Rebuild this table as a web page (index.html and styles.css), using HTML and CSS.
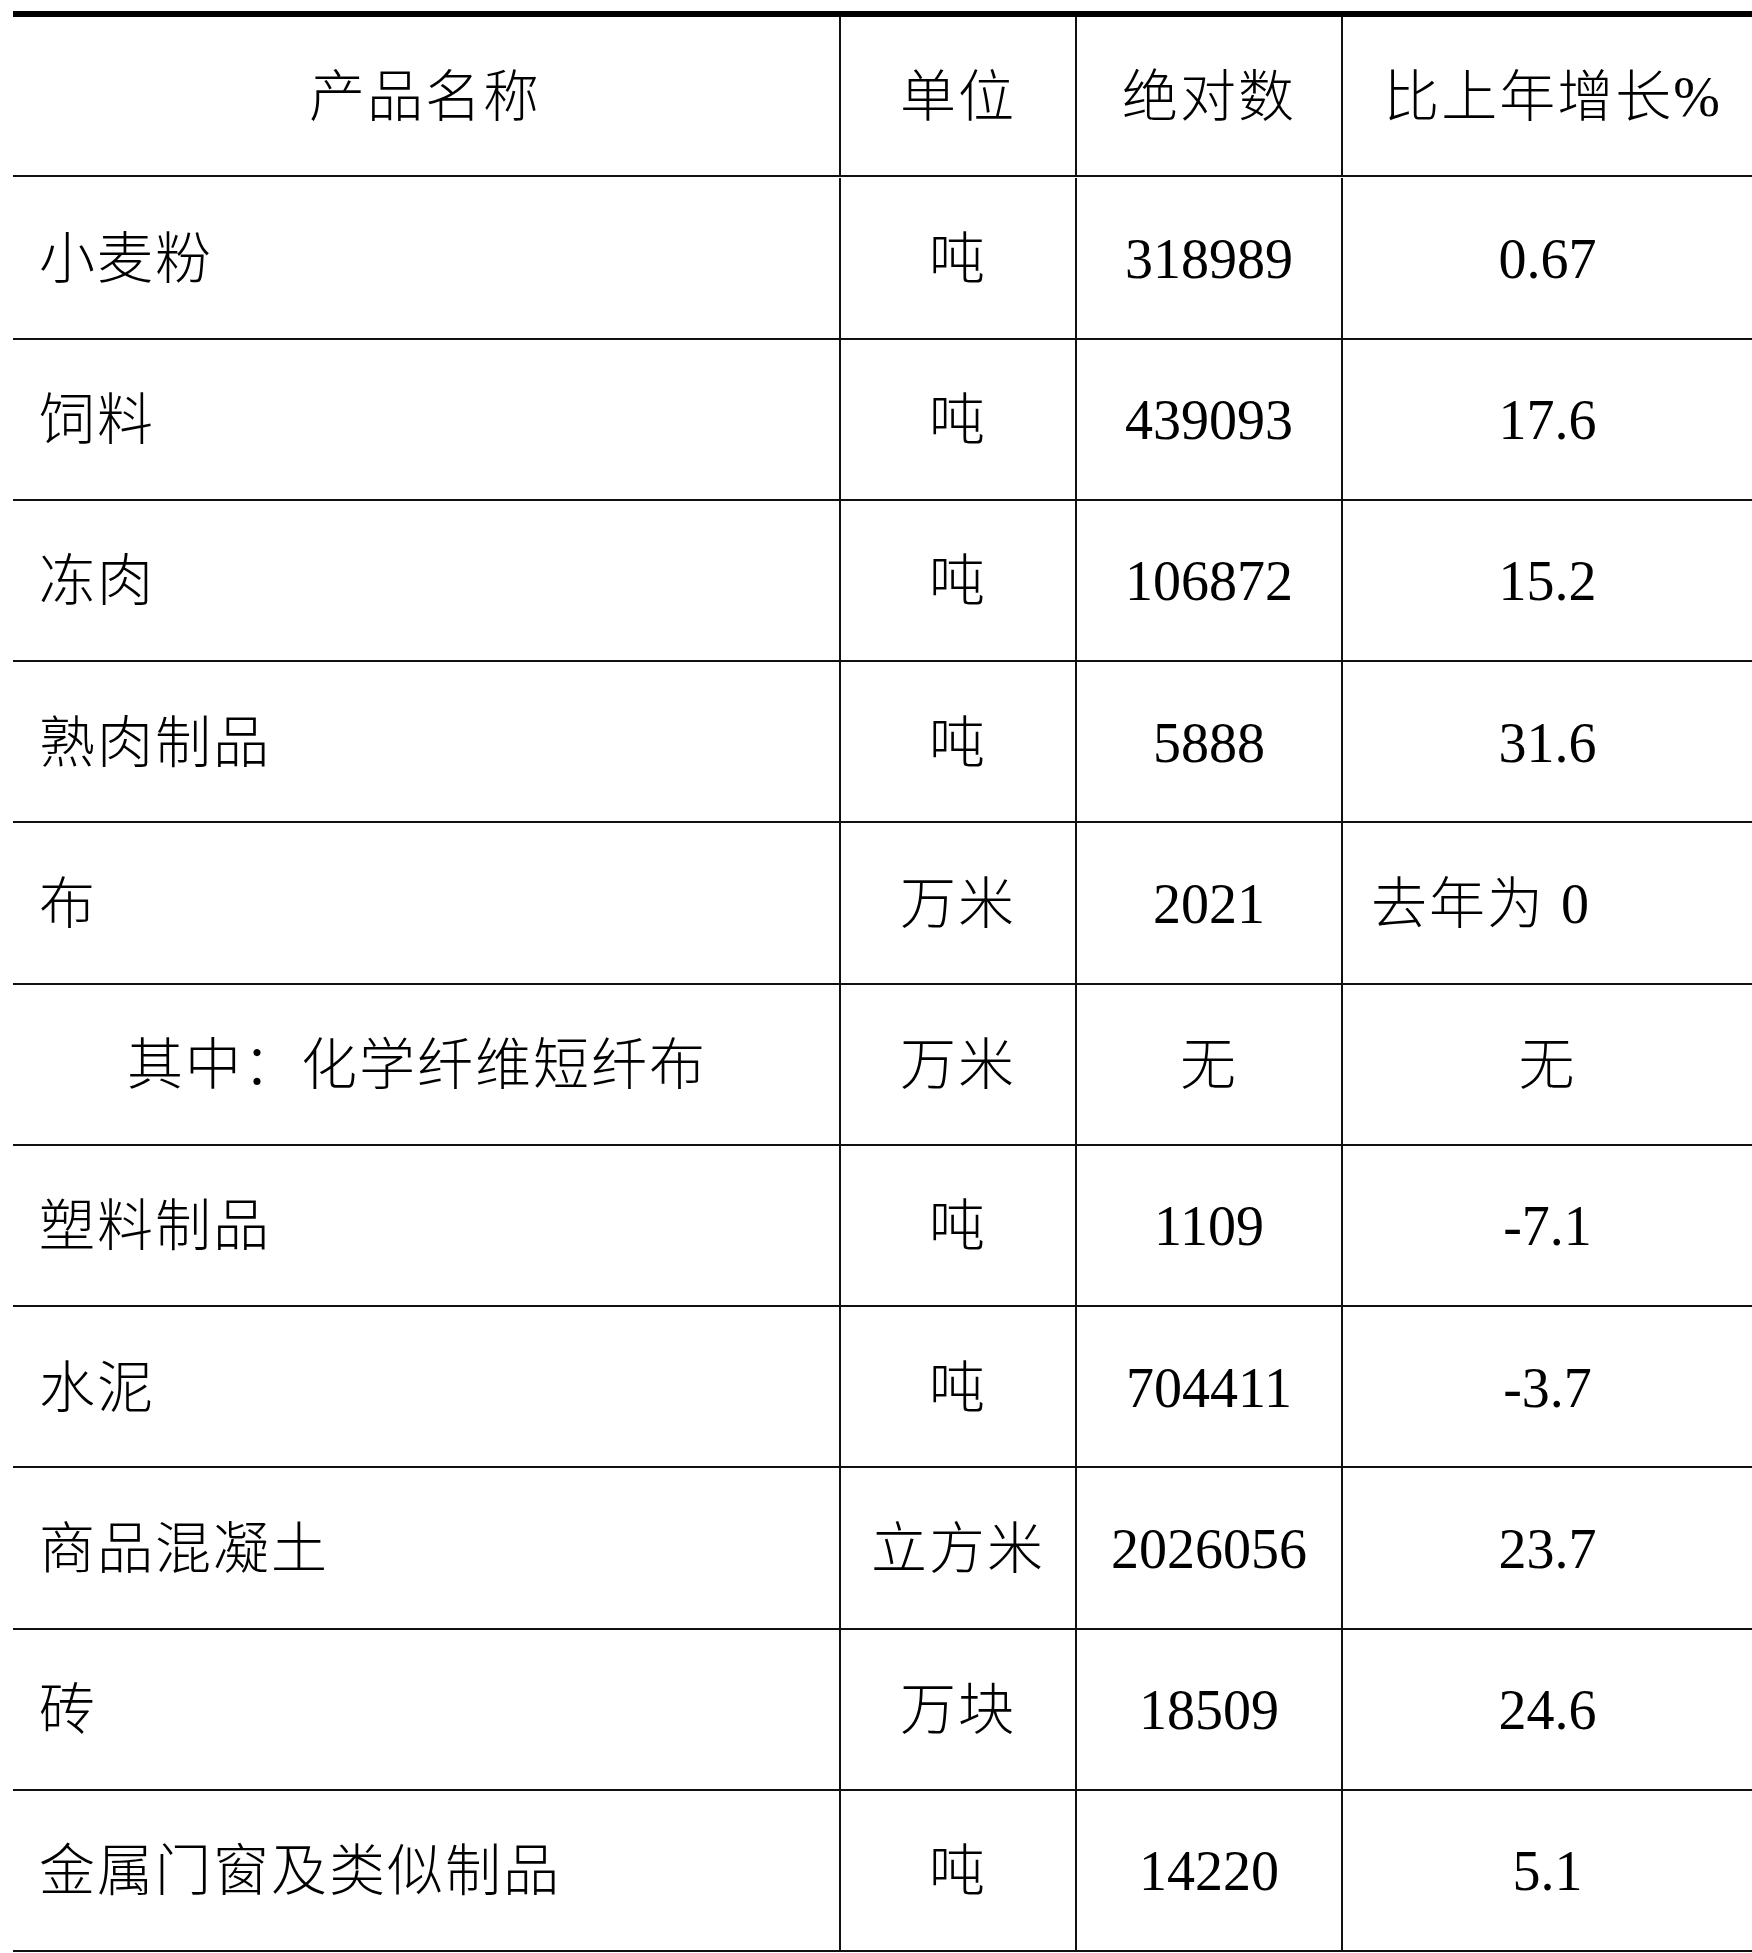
FILE: index.html
```html
<!DOCTYPE html>
<html lang="zh-CN">
<head>
<meta charset="utf-8">
<title>产品产量</title>
<link rel="stylesheet" href="styles.css">
</head>
<body>
<div class="sheet">
  <div class="grid">
    <div class="cell cn name-head">产品名称</div>
    <div class="cell cn">单位</div>
    <div class="cell cn">绝对数</div>
    <div class="cell cn growth-head">比上年增长%</div>

    <div class="cell cn name">小麦粉</div>
    <div class="cell cn">吨</div>
    <div class="cell">318989</div>
    <div class="cell">0.67</div>

    <div class="cell cn name">饲料</div>
    <div class="cell cn">吨</div>
    <div class="cell">439093</div>
    <div class="cell">17.6</div>

    <div class="cell cn name">冻肉</div>
    <div class="cell cn">吨</div>
    <div class="cell">106872</div>
    <div class="cell">15.2</div>

    <div class="cell cn name">熟肉制品</div>
    <div class="cell cn">吨</div>
    <div class="cell">5888</div>
    <div class="cell">31.6</div>

    <div class="cell cn name">布</div>
    <div class="cell cn">万米</div>
    <div class="cell">2021</div>
    <div class="cell cn left">去年为 0</div>

    <div class="cell cn name sub">其中：化学纤维短纤布</div>
    <div class="cell cn">万米</div>
    <div class="cell cn">无</div>
    <div class="cell cn">无</div>

    <div class="cell cn name">塑料制品</div>
    <div class="cell cn">吨</div>
    <div class="cell">1109</div>
    <div class="cell">-7.1</div>

    <div class="cell cn name">水泥</div>
    <div class="cell cn">吨</div>
    <div class="cell">704411</div>
    <div class="cell">-3.7</div>

    <div class="cell cn name">商品混凝土</div>
    <div class="cell cn">立方米</div>
    <div class="cell">2026056</div>
    <div class="cell">23.7</div>

    <div class="cell cn name">砖</div>
    <div class="cell cn">万块</div>
    <div class="cell">18509</div>
    <div class="cell">24.6</div>

    <div class="cell cn name">金属门窗及类似制品</div>
    <div class="cell cn">吨</div>
    <div class="cell">14220</div>
    <div class="cell">5.1</div>
  </div>
</div>
</body>
</html>
```

FILE: styles.css
```css
html, body {
  margin: 0;
  padding: 0;
  background: #ffffff;
}

.sheet {
  padding: 11px 0 0 13px;
}

.grid {
  display: grid;
  grid-template-columns: 826px 236px 266px 411px;
  grid-auto-rows: 161.25px;
  border-top: 6px solid #000000;
  width: 1739px;
  font-family: "Liberation Serif", "Noto Sans CJK SC", serif;
  font-size: 56px;
  font-weight: 300;
  color: #000000;
}

.grid .cell:first-child,
.grid .cell:nth-child(2),
.grid .cell:nth-child(3),
.grid .cell:nth-child(4) {
  height: 159.5px;
}

.cell {
  box-sizing: border-box;
  display: flex;
  align-items: center;
  justify-content: center;
  padding-top: 2px;
  border-bottom: 2px solid #111111;
  border-left: 2px solid #111111;
  white-space: nowrap;
  line-height: 1;
}

.cell.cn {
  letter-spacing: 2px;
}

.cell.name {
  border-left: none;
  justify-content: flex-start;
  padding-left: 26px;
}

.cell.name-head {
  border-left: none;
  padding-left: 0;
  justify-content: center;
  padding-right: 2px;
}

.cell.growth-head {
  padding-left: 10px;
}

.cell.sub {
  padding-left: 114px;
}

.cell.left {
  justify-content: flex-start;
  padding-left: 28px;
}
```
